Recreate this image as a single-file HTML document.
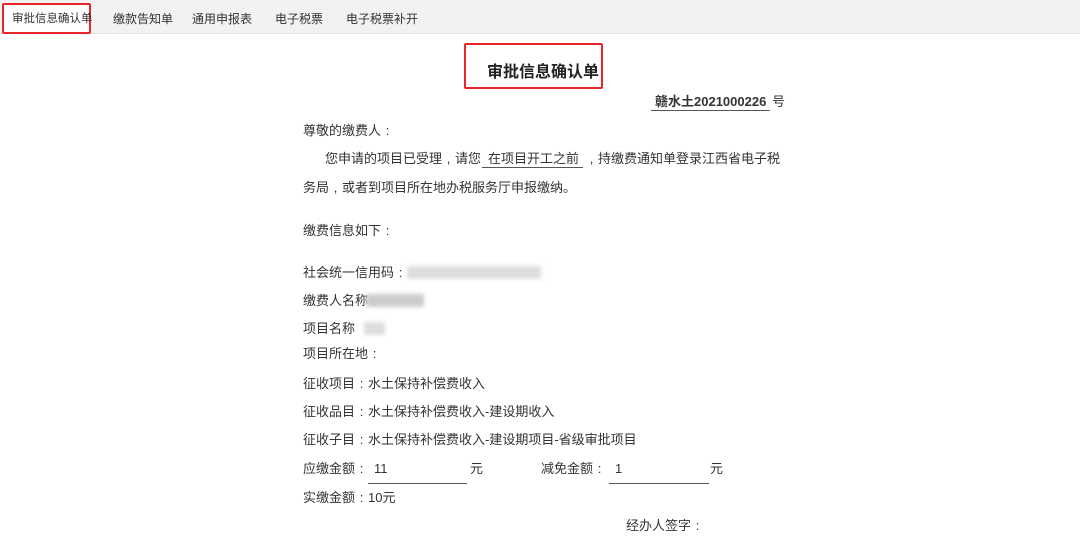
<!DOCTYPE html>
<html><head><meta charset="utf-8"><style>
body{margin:0;width:1080px;height:536px;background:#fff;position:relative;overflow:hidden;font-family:"Liberation Sans","Noto Sans CJK SC",sans-serif;color:#333;font-size:13px}
.t{position:absolute;line-height:20px;white-space:nowrap}
.p{display:inline-block;width:1em;text-align:center}
.bar{position:absolute;left:0;top:0;width:1080px;height:33px;background:#f2f2f2;border-bottom:1px solid #e4e4e4}
.tab{position:absolute;top:11px;font-size:12px;line-height:16px;color:#333}
.u{position:absolute;height:1px;background:#555}
.blur{position:absolute;background:#ddd;filter:blur(2px)}
</style></head><body>
<div class="bar"></div>
<div style="position:absolute;left:2px;top:3px;width:89px;height:31px;background:#fff;border:2px solid #e8262a;border-radius:2px;box-sizing:border-box"></div>
<div class="tab" style="left:12px;font-size:11.5px">审批信息确认单</div>
<div class="tab" style="left:113px">缴款告知单</div>
<div class="tab" style="left:192px">通用申报表</div>
<div class="tab" style="left:275px">电子税票</div>
<div class="tab" style="left:346px">电子税票补开</div>

<div style="position:absolute;left:464px;top:43px;width:139px;height:46px;border:2px solid #e8262a;border-radius:2px;box-sizing:border-box"></div>
<div class="t" style="left:487px;top:62px;font-size:16px;font-weight:bold;line-height:22px;color:#222">审批信息确认单</div>
<div class="t" style="left:655px;top:92px;font-weight:bold">赣水土2021000226</div>
<div class="u" style="left:651px;top:110px;width:119px"></div>
<div class="t" style="left:772px;top:92px">号</div>

<div class="t" style="left:303px;top:121px">尊敬的缴费人<span class="p">:</span></div>
<div class="t" style="left:325px;top:149px">您申请的项目已受理<span class="p">,</span>请您</div>
<div class="t" style="left:488px;top:149px">在项目开工之前</div>
<div class="t" style="left:585px;top:149px"><span class="p">,</span>持缴费通知单登录江西省电子税</div>
<div class="u" style="left:482px;top:167px;width:101px"></div>
<div class="t" style="left:303px;top:178px">务局<span class="p">,</span>或者到项目所在地办税服务厅申报缴纳。</div>
<div class="t" style="left:303px;top:221px">缴费信息如下<span class="p">:</span></div>
<div class="t" style="left:303px;top:263px">社会统一信用码<span class="p">:</span></div>
<div class="blur" style="left:407px;top:266px;width:134px;height:13px"></div>
<div class="t" style="left:303px;top:291px">缴费人名称<span class="p">:</span></div>
<div class="blur" style="left:366px;top:294px;width:58px;height:13px;background:#ccc"></div>
<div class="t" style="left:303px;top:319px">项目名称</div>
<div class="blur" style="left:364px;top:322px;width:21px;height:13px"></div>
<div class="t" style="left:303px;top:344px">项目所在地<span class="p">:</span></div>
<div class="t" style="left:303px;top:374px">征收项目<span class="p">:</span>水土保持补偿费收入</div>
<div class="t" style="left:303px;top:402px">征收品目<span class="p">:</span>水土保持补偿费收入-建设期收入</div>
<div class="t" style="left:303px;top:430px">征收子目<span class="p">:</span>水土保持补偿费收入-建设期项目-省级审批项目</div>
<div class="t" style="left:303px;top:459px">应缴金额<span class="p">:</span></div>
<div class="t" style="left:374px;top:459px">11</div>
<div class="u" style="left:368px;top:483px;width:99px"></div>
<div class="t" style="left:470px;top:459px">元</div>
<div class="t" style="left:541px;top:459px">减免金额<span class="p">:</span></div>
<div class="t" style="left:615px;top:459px">1</div>
<div class="u" style="left:609px;top:483px;width:100px"></div>
<div class="t" style="left:710px;top:459px">元</div>
<div class="t" style="left:303px;top:488px">实缴金额<span class="p">:</span>10元</div>
<div class="t" style="left:626px;top:516px">经办人签字<span class="p">:</span></div>
</body></html>
